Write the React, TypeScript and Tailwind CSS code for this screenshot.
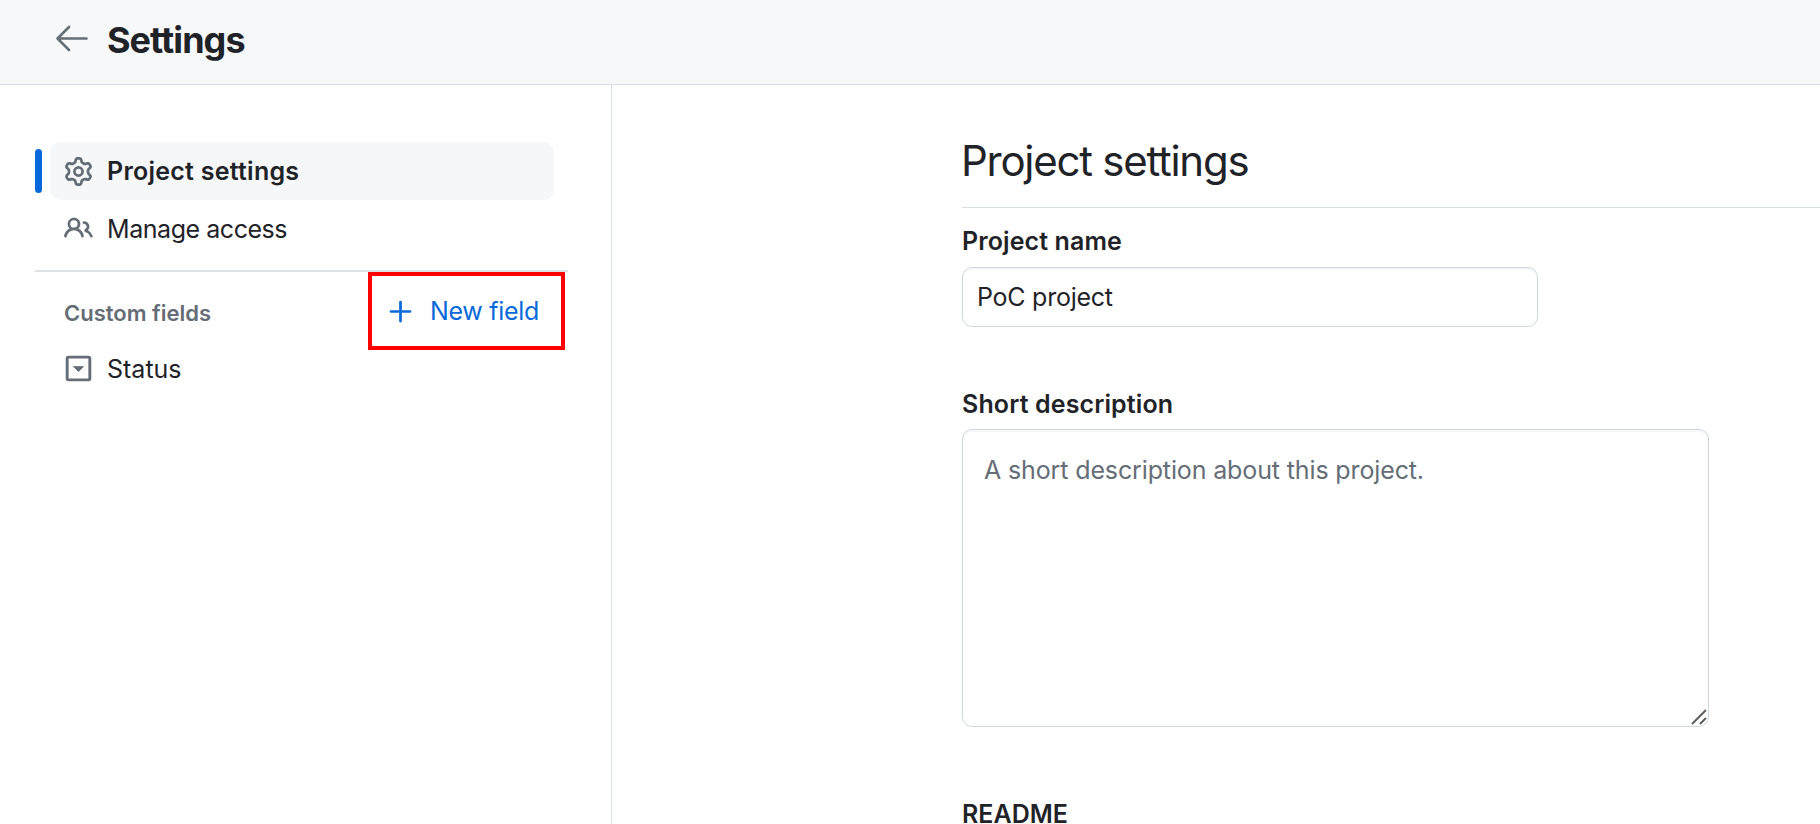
import type { ReactNode } from 'react';

function Icon({ className, children }: { className: string; children: ReactNode }) {
  return (
    <svg className={className} viewBox="0 0 16 16" fill="none" stroke="currentColor" strokeWidth="1.5" strokeLinecap="round" strokeLinejoin="round">
      {children}
    </svg>
  );
}

const GearIcon = () => (
  <svg className="size-[29px]" viewBox="0 0 16 16" fill="currentColor">
    <path d="M8 0a8.2 8.2 0 0 1 .701.031C9.444.095 9.99.645 10.16 1.29l.288 1.107c.018.066.079.158.212.224.231.114.454.243.668.386.123.082.233.09.299.071l1.103-.303c.644-.176 1.392.021 1.82.63.27.385.506.792.704 1.218.315.675.111 1.422-.364 1.891l-.814.806c-.049.048-.098.147-.088.294.016.257.016.515 0 .772-.01.147.038.246.088.294l.814.806c.475.469.679 1.216.364 1.891a7.977 7.977 0 0 1-.704 1.217c-.428.61-1.176.807-1.82.63l-1.102-.302c-.067-.019-.177-.011-.3.071a5.909 5.909 0 0 1-.668.386c-.133.066-.194.158-.211.224l-.29 1.106c-.168.646-.715 1.196-1.458 1.26a8.006 8.006 0 0 1-1.402 0c-.743-.064-1.289-.614-1.458-1.26l-.289-1.106c-.018-.066-.079-.158-.212-.224a5.738 5.738 0 0 1-.668-.386c-.123-.082-.233-.09-.299-.071l-1.103.303c-.644.176-1.392-.021-1.82-.63a8.12 8.12 0 0 1-.704-1.218c-.315-.675-.111-1.422.363-1.891l.815-.806c.05-.048.098-.147.088-.294a6.214 6.214 0 0 1 0-.772c.01-.147-.038-.246-.088-.294l-.815-.806C.635 6.045.431 5.298.746 4.623a7.92 7.92 0 0 1 .704-1.217c.428-.61 1.176-.807 1.82-.63l1.102.302c.067.019.177.011.3-.071.214-.143.437-.272.668-.386.133-.066.194-.158.211-.224l.29-1.106C6.009.645 6.556.095 7.299.03 7.53.01 7.764 0 8 0Zm-.571 1.525c-.036.003-.108.036-.137.146l-.289 1.105c-.147.561-.549.967-.998 1.189-.173.086-.34.183-.5.29-.417.278-.97.423-1.529.27l-1.103-.303c-.109-.03-.175.016-.195.045-.22.312-.412.644-.573.99-.014.031-.021.11.059.19l.815.806c.411.406.562.957.53 1.456a4.709 4.709 0 0 0 0 .582c.032.499-.119 1.05-.53 1.456l-.815.806c-.081.08-.073.159-.059.19.162.346.353.677.573.989.02.03.085.076.195.046l1.102-.303c.56-.153 1.113-.008 1.53.27.161.107.328.204.501.29.447.222.85.629.997 1.189l.289 1.105c.029.109.101.143.137.146a6.6 6.6 0 0 0 1.142 0c.036-.003.108-.036.137-.146l.289-1.105c.147-.561.549-.967.998-1.189.173-.086.34-.183.5-.29.417-.278.97-.423 1.529-.27l1.103.303c.109.029.175-.016.195-.045.22-.313.411-.644.573-.99.014-.031.021-.11-.059-.19l-.815-.806c-.411-.406-.562-.957-.53-1.456a4.709 4.709 0 0 0 0-.582c-.032-.499.119-1.05.53-1.456l.815-.806c.081-.08.073-.159.059-.19a6.464 6.464 0 0 0-.573-.989c-.02-.03-.085-.076-.195-.046l-1.102.303c-.56.153-1.113.008-1.53-.27a4.44 4.44 0 0 0-.501-.29c-.447-.222-.85-.629-.997-1.189l-.289-1.105c-.029-.11-.101-.143-.137-.146a6.6 6.6 0 0 0-1.142 0ZM11 8a3 3 0 1 1-6 0 3 3 0 0 1 6 0ZM9.5 8a1.5 1.5 0 1 0-3.001.001A1.5 1.5 0 0 0 9.5 8Z" />
  </svg>
);

const PeopleIcon = () => (
  <svg className="mb-0.5 size-[29px]" viewBox="0 0 16 16" fill="currentColor">
    <path d="M2 5.5a3.5 3.5 0 1 1 5.898 2.549 5.508 5.508 0 0 1 3.034 4.084.75.75 0 1 1-1.482.235 4 4 0 0 0-7.9 0 .75.75 0 0 1-1.482-.236A5.507 5.507 0 0 1 3.102 8.05 3.493 3.493 0 0 1 2 5.5ZM11 4a3.001 3.001 0 0 1 2.22 5.018 5.01 5.01 0 0 1 2.56 3.012.749.749 0 0 1-.885.954.752.752 0 0 1-.549-.514 3.507 3.507 0 0 0-2.522-2.372.75.75 0 0 1-.574-.73v-.352a.75.75 0 0 1 .416-.672A1.5 1.5 0 0 0 11 5.5.75.75 0 0 1 11 4Zm-5.5-.5a2 2 0 1 0-.001 3.999A2 2 0 0 0 5.5 3.5Z" />
  </svg>
);

const SelectIcon = () => (
  <Icon className="mb-0.5 size-[29px]">
    <rect x="1.75" y="1.75" width="12.5" height="12.5" rx=".7" strokeWidth="1.6" />
    <path d="m5.4 7.1 2.6 2.55 2.6-2.55Z" fill="currentColor" strokeWidth=".5" />
  </Icon>
);

function NavItem({ icon, label, active = false, labelClass = '' }: { icon: ReactNode; label: string; active?: boolean; labelClass?: string }) {
  return (
    <div className="flex items-center">
      <span className={active ? 'mr-2 h-11 w-[7px] rounded bg-[#0969da]' : 'mr-2 h-11 w-[7px]'} />
      <div className={active ? 'flex h-[58px] w-[504px] items-center rounded-[10px] bg-[#f5f7f9] pl-[14px] font-semibold' : 'flex h-[58px] w-[504px] items-center pl-[14px]'}>
        <span className="mr-[14px] flex w-[29px] shrink-0 justify-center text-[#656d76]">{icon}</span>
        <span className={`text-[25px] leading-8 ${labelClass}`}>{label}</span>
      </div>
    </div>
  );
}

export default function App() {
  return (
    <div className="flex h-[824px] w-[1820px] flex-col overflow-hidden bg-white font-['Inter',sans-serif] text-[#1f2328]">
      <header className="flex h-[85px] shrink-0 items-center border-b border-[#d8dee4] bg-[#f6f8fa] pl-[54px]">
        <svg className="mb-[7px] h-[27px] w-[34px] text-[#656d76]" viewBox="0 0 34 27" fill="none" stroke="currentColor" strokeWidth="2.6" strokeLinecap="round" strokeLinejoin="round">
          <path d="M15 2 3.5 13.5 15 25M3.5 13.5h29" />
        </svg>
        <h1 className="mb-[5px] ml-[19px] text-[36px] leading-10 font-bold tracking-[-0.95px]">Settings</h1>
      </header>
      <div className="flex min-h-0 flex-1">
        <aside className="w-[612px] shrink-0 border-r border-[#d8dee4] pt-[57px] pl-[35px]">
          <NavItem active icon={<GearIcon />} label="Project settings" labelClass="tracking-[0.25px]" />
          <NavItem icon={<PeopleIcon />} label="Manage access" labelClass="tracking-[-0.45px]" />
          <div className="mt-3 h-0.5 w-[533px] bg-[#dee2e7]" />
          <div className="flex h-[78px] w-[530px] items-center justify-between pl-[29px]">
            <h2 className="mt-1 text-[22px] leading-8 font-semibold text-[#656d76]">Custom fields</h2>
            <button className="flex h-[78px] w-[197px] items-center border-4 border-[#ff0000] pl-[14px] text-[#0969da]">
              <Icon className="size-[29px]">
                <path d="M8 2.75v10.5M2.75 8h10.5" strokeWidth="1.5" />
              </Icon>
              <span className="ml-[15px] text-[25px] leading-8 tracking-[-0.3px] whitespace-nowrap">New field</span>
            </button>
          </div>
          <div className="-mt-[10px]">
            <NavItem icon={<SelectIcon />} label="Status" />
          </div>
        </aside>
        <main className="flex-1 pt-[49px] pl-[350px]">
          <h2 className="h-[74px] border-b border-[#d8dee4] text-[42px] leading-[54px] tracking-[-1.25px]"><span className="-ml-px">Project settings</span></h2>
          <div className="mt-[17px] text-[25px] leading-8 font-semibold tracking-[0.1px]">Project name</div>
          <div className="mt-[10px] flex h-[60px] w-[576px] items-center rounded-[10px] border border-[#d0d7de] pl-[14px] text-[25px] leading-8 tracking-[-0.25px] shadow-[inset_0_2px_0_rgba(208,215,222,0.2)]">PoC project</div>
          <div className="mt-[61px] text-[25px] leading-8 font-semibold tracking-[0.12px]">Short description</div>
          <div className="mt-[9px] flex h-[298px] w-[747px] items-start justify-between rounded-[10px] border border-[#d0d7de] pt-6 pl-[21px] text-[25px] leading-8 text-[#656d76] shadow-[inset_0_2px_0_rgba(208,215,222,0.2)]">
            <span className="tracking-[-0.13px]">A short description about this project.</span>
            <svg className="mr-px mb-px size-4 self-end" viewBox="0 0 16 16" fill="none" stroke="#5c5c5c" strokeWidth="1.9">
              <path d="M1 15 15 1M9 15l6-6" />
            </svg>
          </div>
          <div className="mt-[71px] text-[25px] leading-8 font-semibold">README</div>
        </main>
      </div>
    </div>
  );
}
